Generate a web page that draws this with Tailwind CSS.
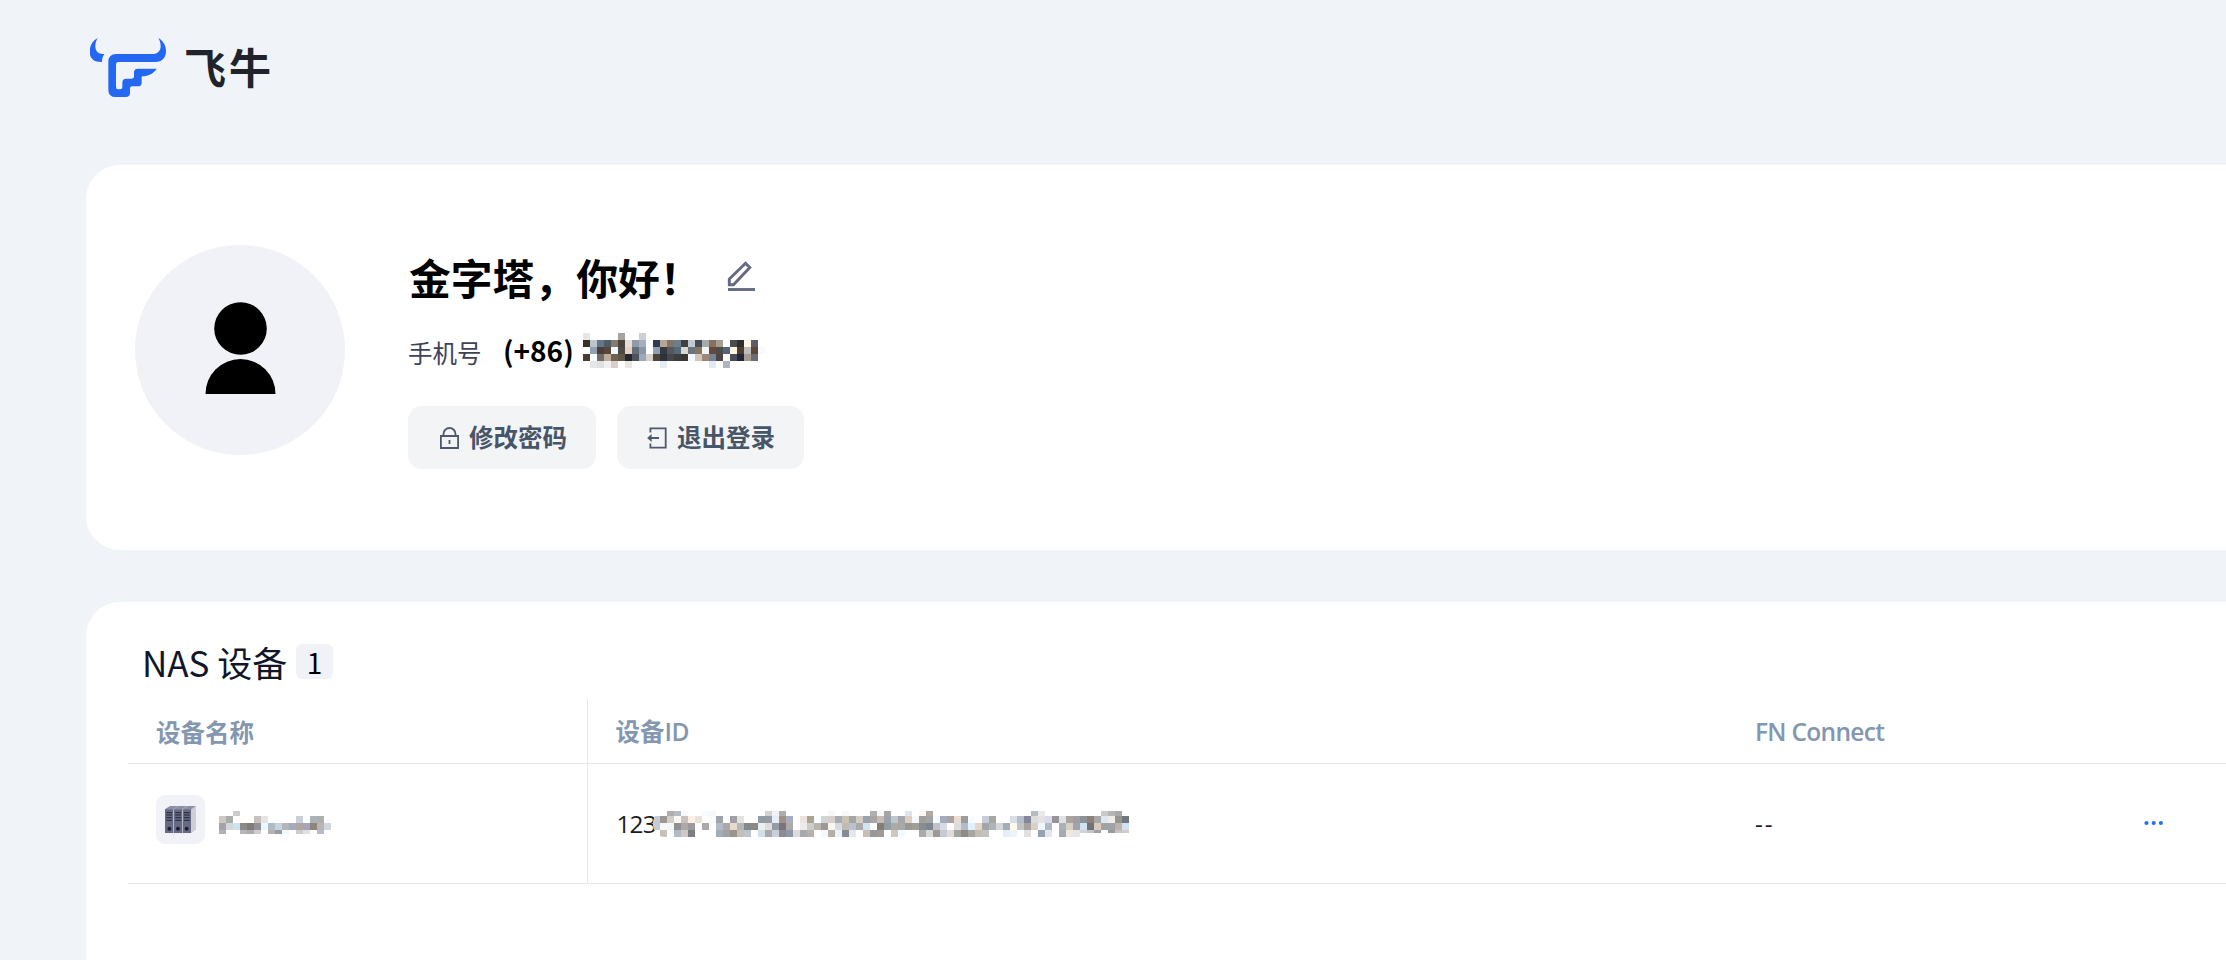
<!DOCTYPE html>
<html lang="zh-CN">
<head>
  <meta charset="UTF-8" />
  <meta name="viewport" content="width=device-width, initial-scale=1.0"/>
  <title>飞牛</title>
  <script src="https://cdn.jsdelivr.net/npm/@tailwindcss/browser@4"></script>
</head>
<body class="bg-[#f0f4f9] h-screen overflow-hidden pl-[86px] flex flex-col font-['Noto_Sans_CJK_SC',sans-serif] text-black">

  <header class="h-[165px] shrink-0 flex items-start pl-1 pt-[37px]">
    <svg class="w-[76px] h-[61px] shrink-0" viewBox="60 51 228 183" fill="#2468f2">
      <path d="M83 54C66 63 59 79 59 95C59 116 72 127 96 126C96 117 98 110 103 102C87 104 76 95 76 79C76 69 79 61 83 54Z"/>
      <path d="M265 54C280 62 288 77 288 93C288 113 276 126 256 126H145Q138 126 138 133V200Q138 208 144 208H151Q157 208 157 202V188Q157 176 168 176H184Q192 176 192 169V157Q192 146 204 146H260C251 160 236 168 217 169Q215 170 215 174V188Q215 199 204 199H187Q180 199 180 205V218Q180 231 167 231H137Q115 231 115 209V126Q115 102 139 102H250C262 102 272 93 272 79C272 69 269 61 265 54Z"/>
    </svg>
    <span class="ml-[18px] -mt-[1px] text-[42px] leading-[60px] font-bold tracking-[3px] text-[#20242a]">飞牛</span>
  </header>

  <section class="h-[385px] shrink-0 bg-white rounded-l-[34px] pl-[49px] flex">
    <div class="mt-20 size-[210px] rounded-full bg-[#f1f2f8] flex justify-center">
      <svg class="size-[210px]" viewBox="0 0 210 210">
        <circle cx="105.5" cy="83.5" r="26.3"/>
        <path d="M70.5 149a35 35 0 0 1 70 0z"/>
      </svg>
    </div>
    <div class="ml-[63px] pt-[82px]">
      <div class="flex items-start h-[60px]">
        <h1 class="text-[41.8px] leading-[60px] font-bold whitespace-nowrap w-[319px] pl-px">金字塔，你好！</h1>
        <svg class="mt-[14px] w-[29px] h-[31px]" viewBox="0 0 29 31" fill="none" stroke="#646a80" stroke-width="2.9">
          <path d="M2.3 23.7V18L18.5 2.2L22.8 6.5L6.5 23.7Z"/>
          <path d="M1 28.5H28"/>
        </svg>
      </div>
      <div class="flex items-start mt-[19px] h-[44px]">
        <span class="text-[24.5px] leading-[44px] mt-[5px] text-[#3d4259] w-[95px]">手机号</span>
        <span class="text-[28px] leading-[44px] mt-[2px] font-bold w-[73px] whitespace-nowrap shrink-0">(+86)</span>
        <svg id="phone" class="mt-[7px] ml-[7px] w-[189px] h-[35px]" shape-rendering="crispEdges"></svg>
      </div>
      <div class="flex gap-[21px] mt-[36px]">
        <button class="w-[188px] h-[63px] rounded-[14px] bg-[#f2f4f6] flex items-center pl-8 text-[24.5px] font-bold text-[#475569]">
          <svg class="w-[19px] h-[22px] mr-[10px]" viewBox="0 0 19 22" fill="none" stroke="#4e596d" stroke-width="1.8">
            <path d="M.9 9H18.1V21H.9ZM3.5 9V7a6 6 0 0 1 12 0V9M9.5 13V17"/>
          </svg>
          修改密码
        </button>
        <button class="w-[187px] h-[63px] rounded-[14px] bg-[#f2f4f6] flex items-center pl-[30px] text-[24.5px] font-bold text-[#475569]">
          <svg class="w-[20px] h-[22px] mr-[10px]" viewBox="0 0 20 22" fill="none" stroke="#4e596d" stroke-width="1.8">
            <path d="M3.4 5.5V1.3H18.7V20.7H3.4V16.5M2.5 11H12"/>
            <path d="M.2 11L4.6 7V15Z" fill="#4e596d" stroke="none"/>
          </svg>
          退出登录
        </button>
      </div>
    </div>
  </section>

  <section class="mt-[52px] grow bg-white rounded-tl-[34px] pl-[42px]">
    <div class="flex items-start h-[97px] pt-[32px] pl-[14px]">
      <h2 class="text-[35px] leading-[56px] text-[#12162a] w-[154px] whitespace-nowrap">NAS 设备</h2>
      <span class="mt-[10px] w-[37px] h-[35px] rounded-md bg-[#f1f2f8] text-[28px] leading-[37px] text-center">1</span>
    </div>
    <table class="w-full table-fixed border-collapse text-left">
      <colgroup>
        <col class="w-[459px]"/>
        <col class="w-[1140px]"/>
        <col/>
      </colgroup>
      <thead class="text-[24.5px] text-[#8397b1]">
        <tr class="h-[64px] border-b border-[#e5e7eb]">
          <th class="pl-[28px] pt-[3px] font-bold border-r border-[#e5e7eb]">设备名称</th>
          <th class="pl-[28px] pt-[3px] font-bold">设备<span class="font-['Open_Sans',sans-serif] font-semibold tracking-[-0.6px]">ID</span></th>
          <th class="pl-[28px] pt-[3px] font-['Open_Sans',sans-serif] font-semibold tracking-[-0.7px]">FN Connect</th>
        </tr>
      </thead>
      <tbody class="font-['Open_Sans',sans-serif] text-[24.3px] text-[#1a1b22]">
        <tr class="h-[120px] border-b border-[#e5e7eb]">
          <td class="pl-[28px] border-r border-[#e5e7eb]">
            <div class="flex items-center h-[49px] -mt-[8px]">
              <div class="size-[49px] rounded-[9px] bg-[#f1f2f8]">
                <svg class="size-[49px]" viewBox="0 0 147 147">
                  <path d="M27 43L42 33H120V102L106 114H27Z" fill="#b4b6c2"/>
                  <path d="M105 44L120 34V102L105 114Z" fill="#cdced6"/>
                  <path d="M27 43L43 33H66L51 43ZM54 43L69 33H92L78 43ZM81 43L96 33H118L105 43Z" fill="#8c8fa2"/>
                  <path d="M27 43H51V114H27ZM54 43H78V114H54ZM81 43H105V114H81Z" fill="#666a82"/>
                  <path d="M31 53H48M31 60H48M31 68H48M31 76H48M58 53H75M58 60H75M58 68H75M58 76H75M84 53H101M84 60H101M84 68H101M84 76H101" stroke="#23263c" stroke-width="3"/>
                  <g fill="#1c1f33"><circle cx="40" cy="101" r="6"/><circle cx="66" cy="101" r="6"/><circle cx="92" cy="101" r="6"/></g>
                </svg>
              </div>
              <svg id="name" class="ml-[14px] mt-[7px] w-[112px] h-[23px]" shape-rendering="crispEdges"></svg>
            </div>
          </td>
          <td class="pl-[29px]">
            <div class="flex items-center h-[36px] mt-[2px]">
              <span class="w-[36px] tracking-[-0.8px]">123</span>
              <svg id="deviceId" class="w-[476px] h-[26px] shrink-0 rounded-l-xl" shape-rendering="crispEdges"></svg>
            </div>
          </td>
          <td class="pl-[28px]">
            <div class="flex items-center justify-between pr-[62px] h-[36px]">
              <span class="tracking-[2px] mt-[2px]">--</span>
              <svg class="w-[20px] h-[6px] -mt-[1px]" viewBox="0 0 20 6" fill="#2373ee">
                <circle cx="2.5" cy="3" r="2.1"/><circle cx="9.7" cy="3" r="2.1"/><circle cx="16.9" cy="3" r="2.1"/>
              </svg>
            </div>
          </td>
        </tr>
      </tbody>
    </table>
  </section>

  <script>
    // Masked values: one string per row, "-" is an empty cell, n* skips n cells
    const CELL = 7;
    const masks = {
      phone: {
        heights: [7, 7, 7, 7, 7],
        rows: [
          "e6e6e6 4* a5a39f 2* cdd1d4",
          "3b3026 bcc5cc 64778a 4f5b67 857a6e 4b423c e6ddd5 8f9bab a4b0bd - 2d3c55 b8a594 857465 6c7d8e 3c4145 c3c9d1 454e58 a9aaab 857061 a69c90 - 4a4b4d 2e2e2c fff7ea 5a5d66",
          "- 8f9fb8 4b3e38 57463a eff8ff 4b4a49 e3d1c6 626d7a 8a97a6 - 8f9eb5 36393f 55585b 56687a dad7d3 6b747e 857460 f2f4f8 65493d 4f4b49 55647c fff3e6 4f3d2e bdbdbf 5b4737 f6f9ff",
          "4b3d2c f6feff 716c6b bdac99 6e6252 625645 24262f 4e545e 9ba9ba d7d0cb 4c423a 2f3338 44484c 3b3d40 3b3631 f5f9ff d2c4b7 9c8778 738496 4b4643 fdf9f8 4a4d54 22253a a59b92 6b6d73",
          "- e4e7ea e1e0df f0f0f0 d8cfc9 - ece6e3 4* e6ecf3 6* e2e9f1 - aeb6bd"
        ]
      },
      name: {
        heights: [5, 7, 7, 4],
        rows: [
          "2* cbcbcb",
          "cec8c3 a8acaa 3* c7c0bc e6e4e2 4* c9ced8 - aab2bc afafae",
          "a3a3a8 d2d7da cfe0ee 8f8a87 807c78 929199 e9f7ff afbcc6 c8d4dd b3b6b8 a5aabf afa5a3 a4a6b5 8f857a bab5b0 cfd6e2",
          "b2b2b6 2* b2b8b8 acaead d3cbd0 - b7b1ae 949ca3 f0f8ff - cbcccf e0e0e5 - b5bcc7"
        ]
      },
      deviceId: {
        heights: [5, 7, 7, 7],
        rows: [
          "2* b3adab b5bcc6 f7faff 2* f5fbff f8f8f8 7* d2d2d2 f0f2f8 aeadb0 6* f7f7f7 - f7f7f7 3* b0b0b0 f5f9fb a5a5a3 2* dfe5eb - fbf7f4 b0a9a4 14* b5babe e9e9e9 8* c9c9c9 b6b6b6 a9a9ac 2* f0ebe8 bdb5b1",
          "c4ccd4 9b9793 d3cdca fcf8f5 c9c1bf fff0e3 e8e2dc - fafafa a0a4aa - 9fa1a6 e4e4df 2* 939ba4 949da6 e7edf8 a19085 a6aec0 - ece3dc ada296 f9fdff cfd6da d9d0c8 a5adb3 cbc2b5 a5a5a6 d3cdc6 9aa1a8 a5a5a3 c7bbb4 99a3ad bfc7d0 a4a6a9 ddd0c3 f3f9fb a09f9c a2a5a4 f5fbff a4adbb aca2a2 e8ddd0 9c9d98 f7fbff fffdfa c4cdd8 aaa7a2 2* d8dde6 b5bccb 84869a dcdcdc e5e1e6 d8dde9 979397 dfe3e8 a9a49e 9ea0a3 8e9197 8e8177 a6a8aa dce7f0 f0ece6 979391 72777d",
          "c4ccd4 f7f8f6 f2f8f5 909091 aea8a7 9c999f - a9a9aa - b2bbc7 aca8a8 e8dacd b2b8b7 848a8c 8c8888 ebeff0 e0dddd 949ba6 76757d aea9a5 - eeecea cdcccd bab4af 9e9993 f9f7f3 d8dbdd c2bab6 bcc1cc a9aaae d1e2f2 - 857d78 939da6 ababa6 a9aaa6 979797 a29d97 898c93 7f858f bfc2c9 d8dbe3 - dddddd b0bcc6 e0f1fb e6d6c6 a4a6a6 b0b3b9 d4d7da a3adb5 fff9ed c4c4c2 a9a29e dbd0c6 edf8ff b0bac4 - aab0b8 d8cfc5 a0a4a8 d0e2f4 707477 dbcabc a0a2a7 a0a2a7 bcb4aa d0e2f4",
          "- c9c0b7 - b2bac6 cfc8c3 7f7d84 3* a4acb4 9ea3a8 9a948c c5bfb8 bcc4cd - d0dfe8 a7a9ac c9cfd9 8b8b90 9097a9 dbdbdd a9aaad b8b0ab - f5f9fd b5aea8 ebf2f9 888b93 e4e7ec - c7beb6 999897 a19a97 - cbc8be f2faff 2* a9aaa9 d8d9d9 a09993 c5cad5 e0ddd9 a5a59f 8f8a84 a6a5a2 c4bdb6 c4c2bf 2* e8eef6 edf3fa - e0e0e0 - 95a2b0 e3e6eb - a5aab3 f0e7e0 e6e6e8"
        ]
      }
    };
    // the last cells of the device ID's bottom row are cut short
    const tail = "d3d3d5 c5c5c7 9fa1a5 f5fbff 9a9a9b c5c4c5 dacabc".split(" ");

    for (const [id, mask] of Object.entries(masks)) {
      let y = 0;
      let rects = "";
      mask.rows.forEach((row, i) => {
        let x = 0;
        for (const cell of row.split(" ")) {
          if (cell === "-") {
            x += CELL;
          } else if (cell.endsWith("*")) {
            x += CELL * parseInt(cell);
          } else {
            rects += `<rect x="${x}" y="${y}" width="${CELL}" height="${mask.heights[i]}" fill="#${cell}"/>`;
            x += CELL;
          }
        }
        y += mask.heights[i];
      });
      if (id === "deviceId") {
        tail.forEach((color, i) => {
          rects += `<rect x="${(61 + i) * CELL}" y="19" width="${CELL}" height="3" fill="#${color}"/>`;
        });
      }
      document.getElementById(id).innerHTML = rects;
    }
  </script>
</body>
</html>
